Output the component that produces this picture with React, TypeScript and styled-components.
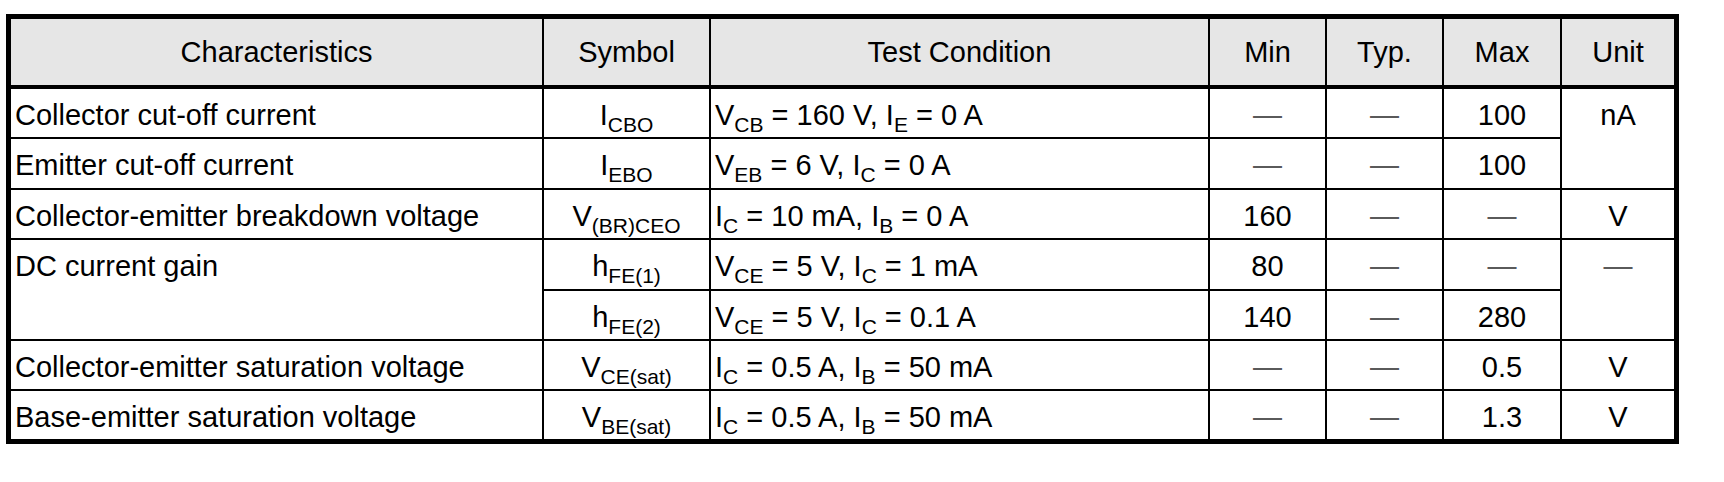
import React from "react";
import styled, { createGlobalStyle } from "styled-components";

const GlobalStyle = createGlobalStyle`
  html, body { margin: 0; padding: 0; background: #fff; }
  body { font-family: "Liberation Sans", Arial, Helvetica, sans-serif; color: #000; }
`;

const Page = styled.div`
  padding: 14px 0 0 6px;
`;

const Sheet = styled.div`
  display: grid;
  grid-template-columns: 531px 165px 497px 115px 115px 116px 112px;
  grid-template-rows: 68px 48px 49px 48px 49px 48px 48px 48px;
  gap: 2px;
  width: max-content;
  background: #000;
  border: 5px solid #000;
  font-size: 29px;
  line-height: 33px;
`;

const HeadCell = styled.div`
  background: #e6e6e6;
  border-bottom: 2px solid #000;
  display: flex;
  align-items: center;
  justify-content: center;
  white-space: nowrap;
`;

const Cell = styled.div<{ $align: "left" | "center"; $span?: number }>`
  background: #fff;
  padding: 10px 4px 0;
  text-align: ${(p) => p.$align};
  grid-row: ${(p) => (p.$span ? `span ${p.$span}` : "auto")};
  white-space: nowrap;
  overflow: hidden;
`;

const Sub = styled.sub`
  font-size: 21px;
  line-height: 0;
  vertical-align: -7px;
`;

const Dash = styled.span`
  color: #5a5a5a;
`;

type Spanned = { text: React.ReactNode; span: number };
type Row = {
  ch?: React.ReactNode | Spanned;
  sym: React.ReactNode;
  cond: React.ReactNode;
  min: string;
  typ: string;
  max: string;
  unit?: string | Spanned;
};

const isSpanned = (v: unknown): v is Spanned =>
  typeof v === "object" && v !== null && "span" in (v as object);

const headers = ["Characteristics", "Symbol", "Test Condition", "Min", "Typ.", "Max", "Unit"];

const rows: Row[] = [
  {
    ch: "Collector cut-off current",
    sym: <>I<Sub>CBO</Sub></>,
    cond: <>V<Sub>CB</Sub> = 160 V, I<Sub>E</Sub> = 0 A</>,
    min: "—",
    typ: "—",
    max: "100",
    unit: { text: "nA", span: 2 },
  },
  {
    ch: "Emitter cut-off current",
    sym: <>I<Sub>EBO</Sub></>,
    cond: <>V<Sub>EB</Sub> = 6 V, I<Sub>C</Sub> = 0 A</>,
    min: "—",
    typ: "—",
    max: "100",
  },
  {
    ch: "Collector-emitter breakdown voltage",
    sym: <>V<Sub>(BR)CEO</Sub></>,
    cond: <>I<Sub>C</Sub> = 10 mA, I<Sub>B</Sub> = 0 A</>,
    min: "160",
    typ: "—",
    max: "—",
    unit: "V",
  },
  {
    ch: { text: "DC current gain", span: 2 },
    sym: <>h<Sub>FE(1)</Sub></>,
    cond: <>V<Sub>CE</Sub> = 5 V, I<Sub>C</Sub> = 1 mA</>,
    min: "80",
    typ: "—",
    max: "—",
    unit: { text: "—", span: 2 },
  },
  {
    sym: <>h<Sub>FE(2)</Sub></>,
    cond: <>V<Sub>CE</Sub> = 5 V, I<Sub>C</Sub> = 0.1 A</>,
    min: "140",
    typ: "—",
    max: "280",
  },
  {
    ch: "Collector-emitter saturation voltage",
    sym: <>V<Sub>CE(sat)</Sub></>,
    cond: <>I<Sub>C</Sub> = 0.5 A, I<Sub>B</Sub> = 50 mA</>,
    min: "—",
    typ: "—",
    max: "0.5",
    unit: "V",
  },
  {
    ch: "Base-emitter saturation voltage",
    sym: <>V<Sub>BE(sat)</Sub></>,
    cond: <>I<Sub>C</Sub> = 0.5 A, I<Sub>B</Sub> = 50 mA</>,
    min: "—",
    typ: "—",
    max: "1.3",
    unit: "V",
  },
];

const Value = ({ v }: { v: React.ReactNode }) =>
  v === "—" ? <Dash>—</Dash> : <>{v}</>;

export default function App() {
  return (
    <>
      <GlobalStyle />
      <Page>
        <Sheet>
          {headers.map((h) => (
            <HeadCell key={h}>{h}</HeadCell>
          ))}
          {rows.map((r, i) => (
            <React.Fragment key={i}>
              {r.ch !== undefined &&
                (isSpanned(r.ch) ? (
                  <Cell $align="left" $span={r.ch.span}>{r.ch.text}</Cell>
                ) : (
                  <Cell $align="left">{r.ch}</Cell>
                ))}
              <Cell $align="center">{r.sym}</Cell>
              <Cell $align="left">{r.cond}</Cell>
              <Cell $align="center"><Value v={r.min} /></Cell>
              <Cell $align="center"><Value v={r.typ} /></Cell>
              <Cell $align="center"><Value v={r.max} /></Cell>
              {r.unit !== undefined &&
                (isSpanned(r.unit) ? (
                  <Cell $align="center" $span={r.unit.span}><Value v={r.unit.text} /></Cell>
                ) : (
                  <Cell $align="center"><Value v={r.unit} /></Cell>
                ))}
            </React.Fragment>
          ))}
        </Sheet>
      </Page>
    </>
  );
}
